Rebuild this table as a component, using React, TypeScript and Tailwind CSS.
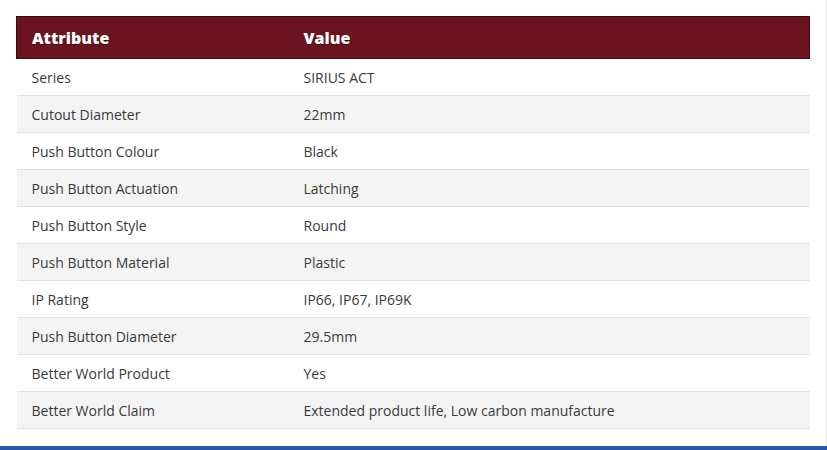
import React from "react";

const rows: [string, string][] = [
  ["Series", "SIRIUS ACT"],
  ["Cutout Diameter", "22mm"],
  ["Push Button Colour", "Black"],
  ["Push Button Actuation", "Latching"],
  ["Push Button Style", "Round"],
  ["Push Button Material", "Plastic"],
  ["IP Rating", "IP66, IP67, IP69K"],
  ["Push Button Diameter", "29.5mm"],
  ["Better World Product", "Yes"],
  ["Better World Claim", "Extended product life, Low carbon manufacture"],
];

export default function App() {
  return (
    <div
      className="w-[827px] h-[450px] flex flex-col bg-white overflow-hidden"
      style={{ fontFamily: '"Open Sans", sans-serif' }}
    >
      <div className="flex-1 border-r border-[#e6e6e6] pt-4 pl-4 pr-4">
        <table className="w-[794px] border-collapse text-[14px] text-[#3a3a3a]">
          <thead>
            <tr className="h-[42px] bg-[#6b141f] border border-[#3a0a10]">
              <th
                className="w-[272px] text-left font-extrabold text-[16px] text-white pl-[15px]"
                style={{ textShadow: "0 1px 1px rgba(0,0,0,0.4)" }}
              >
                Attribute
              </th>
              <th
                className="text-left font-extrabold text-[16px] text-white pl-[15px]"
                style={{ textShadow: "0 1px 1px rgba(0,0,0,0.4)" }}
              >
                Value
              </th>
            </tr>
          </thead>
          <tbody>
            {rows.map(([a, v], i) => (
              <tr
                key={a}
                className={`h-[37px] border-b border-[#e2e2e2] ${
                  i % 2 === 1 ? "bg-[#f4f4f4]" : "bg-white"
                }`}
              >
                <td className="pl-[15px] align-middle">{a}</td>
                <td className="pl-[15px] align-middle">{v}</td>
              </tr>
            ))}
          </tbody>
        </table>
      </div>
      <div className="h-[4px] bg-[#2b56a6]" />
    </div>
  );
}
